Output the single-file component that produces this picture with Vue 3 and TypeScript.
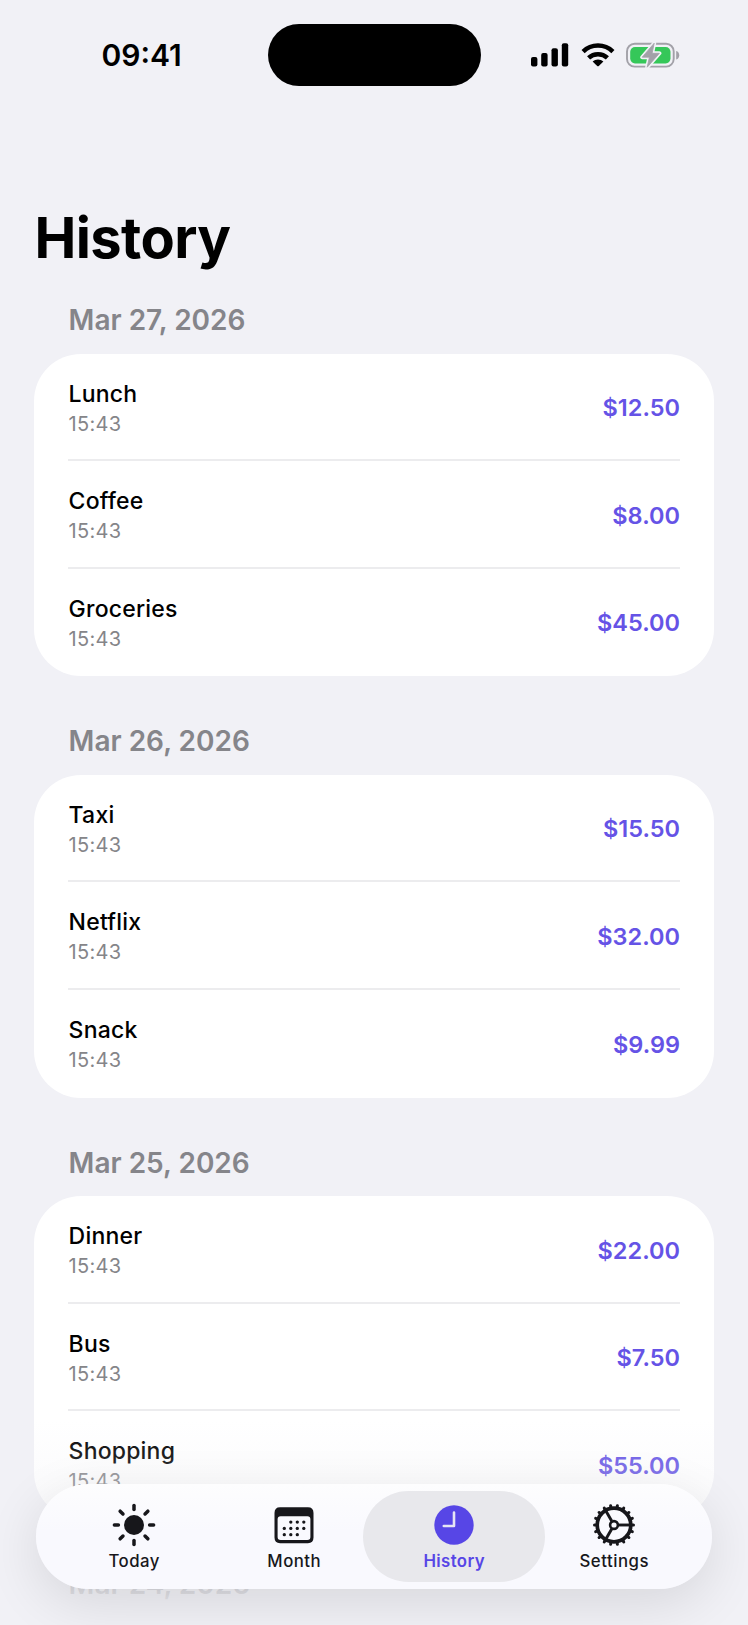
<script setup lang="ts">
interface Expense {
  title: string
  time: string
  amount: string
}

interface Day {
  date: string
  items: Expense[]
}

const days: Day[] = [
  {
    date: 'Mar 27, 2026',
    items: [
      { title: 'Lunch', time: '15:43', amount: '$12.50' },
      { title: 'Coffee', time: '15:43', amount: '$8.00' },
      { title: 'Groceries', time: '15:43', amount: '$45.00' },
    ],
  },
  {
    date: 'Mar 26, 2026',
    items: [
      { title: 'Taxi', time: '15:43', amount: '$15.50' },
      { title: 'Netflix', time: '15:43', amount: '$32.00' },
      { title: 'Snack', time: '15:43', amount: '$9.99' },
    ],
  },
  {
    date: 'Mar 25, 2026',
    items: [
      { title: 'Dinner', time: '15:43', amount: '$22.00' },
      { title: 'Bus', time: '15:43', amount: '$7.50' },
      { title: 'Shopping', time: '15:43', amount: '$55.00' },
    ],
  },
  { date: 'Mar 24, 2026', items: [] },
]

const rays = Array.from({ length: 8 }, (_, i) => i * 45)
const teeth = Array.from({ length: 18 }, (_, i) => i * 20)
const spokes = [0, 120, 240]
const calendarDots: [number, number][] = [
  [20.8, 21.1], [27.3, 21.1], [33.8, 21.1],
  [14.3, 27.4], [20.8, 27.4], [27.3, 27.4], [33.8, 27.4],
  [14.3, 33.7], [20.8, 33.7], [27.3, 33.7],
]
</script>

<template>
  <div class="screen">
    <header class="status">
      <span class="clock">09:41</span>
      <div class="island"></div>
      <div class="indicators">
        <svg class="signal" width="38" height="24" viewBox="0 0 38 24">
          <rect x="0" y="14" width="6.4" height="9.4" rx="2" />
          <rect x="10.2" y="10" width="6.4" height="13.4" rx="2" />
          <rect x="20.5" y="5.2" width="6.4" height="18.2" rx="2" />
          <rect x="30.8" y="0.2" width="6.4" height="23.2" rx="2" />
        </svg>
        <svg class="wifi" width="34" height="24" viewBox="0 0 34 24">
          <path class="wave" d="M2.1 8.6 C10.3 0.6 23.7 0.6 31.9 8.6" />
          <path class="wave" d="M7.6 14.8 C12.8 9.9 21.2 9.9 26.4 14.8" />
          <path d="M11.6 18.5 C14.6 15.7 19.4 15.7 22.4 18.5 L17.8 23 Q17 23.7 16.2 23 Z" />
        </svg>
        <svg class="battery" width="54" height="28" viewBox="0 0 54 28">
          <rect x="1" y="2.8" width="46.7" height="22.8" rx="7.6" fill="none" stroke="#a2a1a8" stroke-width="1.9" />
          <path d="M50.2 10 Q53.2 10.8 53.2 14.2 Q53.2 17.6 50.2 18.4 Z" fill="#a2a1a8" />
          <rect x="4.2" y="6" width="40.3" height="16.4" rx="4.8" fill="#35c759" />
          <path
            d="M28.2 2.2 L16.2 16.2 H23.4 L21.2 26.2 L33.4 12.3 H26.1 Z"
            fill="#a2a1a8" stroke="#f2f2f7" stroke-width="4" stroke-linejoin="round"
          />
          <path
            d="M28.2 2.2 L16.2 16.2 H23.4 L21.2 26.2 L33.4 12.3 H26.1 Z"
            fill="#a2a1a8" stroke="#a2a1a8" stroke-width="0.8" stroke-linejoin="round"
          />
        </svg>
      </div>
    </header>

    <main class="content">
      <h1>History</h1>
      <section v-for="day in days" :key="day.date" class="day">
        <h2>{{ day.date }}</h2>
        <ul v-if="day.items.length" class="card">
          <li v-for="item in day.items" :key="item.title" class="row">
            <div class="info">
              <span class="title">{{ item.title }}</span>
              <span class="time">{{ item.time }}</span>
            </div>
            <span class="amount">{{ item.amount }}</span>
          </li>
        </ul>
      </section>
    </main>

    <div class="fade"></div>

    <nav class="tabs">
      <a class="tab">
        <svg width="48" height="48" viewBox="-24 -24 48 48">
          <circle r="10" />
          <line
            v-for="a in rays" :key="a" x1="15.6" x2="19.6" y1="0" y2="0"
            :transform="`rotate(${a})`" stroke="currentColor" stroke-width="3.5" stroke-linecap="round"
          />
        </svg>
        <span>Today</span>
      </a>
      <a class="tab">
        <svg width="48" height="48" viewBox="0 0 48 48">
          <path
            fill-rule="evenodd"
            d="M10.1 6.3 H37.9 Q43.5 6.3 43.5 11.9 V36.6 Q43.5 42.2 37.9 42.2 H10.1 Q4.5 42.2 4.5 36.6 V11.9 Q4.5 6.3 10.1 6.3 Z M10.6 15.2 Q7.6 15.2 7.6 18.2 V36.1 Q7.6 39.1 10.6 39.1 H37.4 Q40.4 39.1 40.4 36.1 V18.2 Q40.4 15.2 37.4 15.2 Z"
          />
          <circle v-for="([x, y], i) in calendarDots" :key="i" :cx="x" :cy="y" r="1.65" />
        </svg>
        <span>Month</span>
      </a>
      <a class="tab active">
        <svg width="48" height="48" viewBox="-24 -24 48 48">
          <circle r="19.7" />
          <path
            d="M0 -12.5 V1 H-10.2" fill="none" stroke="#e6e5f4" stroke-width="2.6"
            stroke-linecap="round" stroke-linejoin="round"
          />
        </svg>
        <span>History</span>
      </a>
      <a class="tab">
        <svg width="48" height="48" viewBox="-24 -24 48 48">
          <g fill="none" stroke="currentColor">
            <circle r="16.8" stroke-width="3.7" />
            <circle r="3.9" stroke-width="2.6" />
            <line
              v-for="a in spokes" :key="a" x1="4.6" x2="16.4" y1="0" y2="0"
              :transform="`rotate(${a})`" stroke-width="2.9"
            />
            <line
              v-for="a in teeth" :key="a" x1="17.4" x2="19.5" y1="0" y2="0"
              :transform="`rotate(${a})`" stroke-width="3" stroke-linecap="round"
            />
          </g>
        </svg>
        <span>Settings</span>
      </a>
    </nav>
  </div>
</template>

<style>
html,
body {
  margin: 0;
  background: #f2f2f7;
}
</style>

<style scoped>
.screen {
  position: relative;
  box-sizing: border-box;
  width: 748px;
  height: 1625px;
  overflow: hidden;
  background: #f1f1f6;
  color: #000;
  font-family: Inter, "Liberation Sans", sans-serif;
}

.status {
  display: grid;
  grid-template-columns: 267.5px 213px 1fr;
  align-items: center;
  height: 62px;
  padding-top: 24px;
}

.clock {
  padding-left: 101.5px;
  font-size: 30px;
  font-weight: 600;
  line-height: 62px;
}

.island {
  height: 62px;
  border-radius: 31px;
  background: #000;
}

.indicators {
  display: flex;
  align-items: center;
  padding-left: 50px;
}

.wifi {
  margin-left: 12px;
}

.wave {
  fill: none;
  stroke: #000;
  stroke-width: 4.5;
}

.battery {
  margin-left: 11.5px;
}

.content {
  padding: 122px 34px 0;
}

h1 {
  margin: 0;
  padding-left: 0.5px;
  font-size: 56px;
  font-weight: 700;
  line-height: 61px;
  letter-spacing: -0.6px;
}

.day {
  height: 421.3px;
}

h1 + .day {
  margin-top: 31px;
}

h2 {
  margin: 0;
  padding: 0 0 13.5px 34.6px;
  color: #85858a;
  font-size: 28px;
  font-weight: 600;
  line-height: 40px;
}

.card {
  margin: 0;
  padding: 0 34px;
  list-style: none;
  border-radius: 47px;
  background: #fff;
}

.row {
  box-sizing: border-box;
  display: flex;
  justify-content: space-between;
  align-items: center;
  height: 107.6px;
  padding-top: 3.5px;
  border-bottom: 2px solid #ececee;
}

.row:last-child {
  border-bottom-color: transparent;
}

.info {
  display: flex;
  flex-direction: column;
  padding: 1px 0 0 0.6px;
}

.title {
  font-size: 23px;
  font-weight: 500;
  line-height: 30px;
  letter-spacing: 0.2px;
}

.time {
  color: #858589;
  font-size: 20px;
  line-height: 30px;
  letter-spacing: 0.3px;
}

.amount {
  color: #6553e6;
  font-size: 23.5px;
  font-weight: 600;
  line-height: 30px;
}

.fade {
  position: absolute;
  inset: auto 0 0;
  height: 205px;
  background: linear-gradient(
    rgba(241, 241, 246, 0),
    rgba(241, 241, 246, 0.28) 35%,
    rgba(241, 241, 246, 0.75) 80%,
    #f1f1f6 97%
  );
}

.tabs {
  position: absolute;
  left: 36px;
  top: 1484px;
  box-sizing: border-box;
  display: flex;
  width: 676px;
  height: 105px;
  padding: 0 18px;
  border-radius: 52.5px;
  background: linear-gradient(#fdfdfe, #f9f9fe 45%);
  box-shadow: 0 14px 54px rgba(0, 0, 0, 0.11);
}

.tab {
  position: relative;
  z-index: 0;
  display: flex;
  flex: 1;
  flex-direction: column;
  align-items: center;
  padding-top: 16.5px;
  color: #17171b;
  font-size: 16.8px;
  font-weight: 500;
  line-height: 24px;
  letter-spacing: 0.5px;
}

.tab span {
  padding-left: 0.5px;
}

.tab svg {
  fill: currentColor;
}

.tab.active {
  color: #5746e6;
  font-weight: 600;
  letter-spacing: 0.4px;
}

.tab.active::before {
  content: "";
  position: absolute;
  z-index: -1;
  inset: 7px -11px;
  border-radius: 45.5px;
  background: #e8e8ec;
}
</style>
